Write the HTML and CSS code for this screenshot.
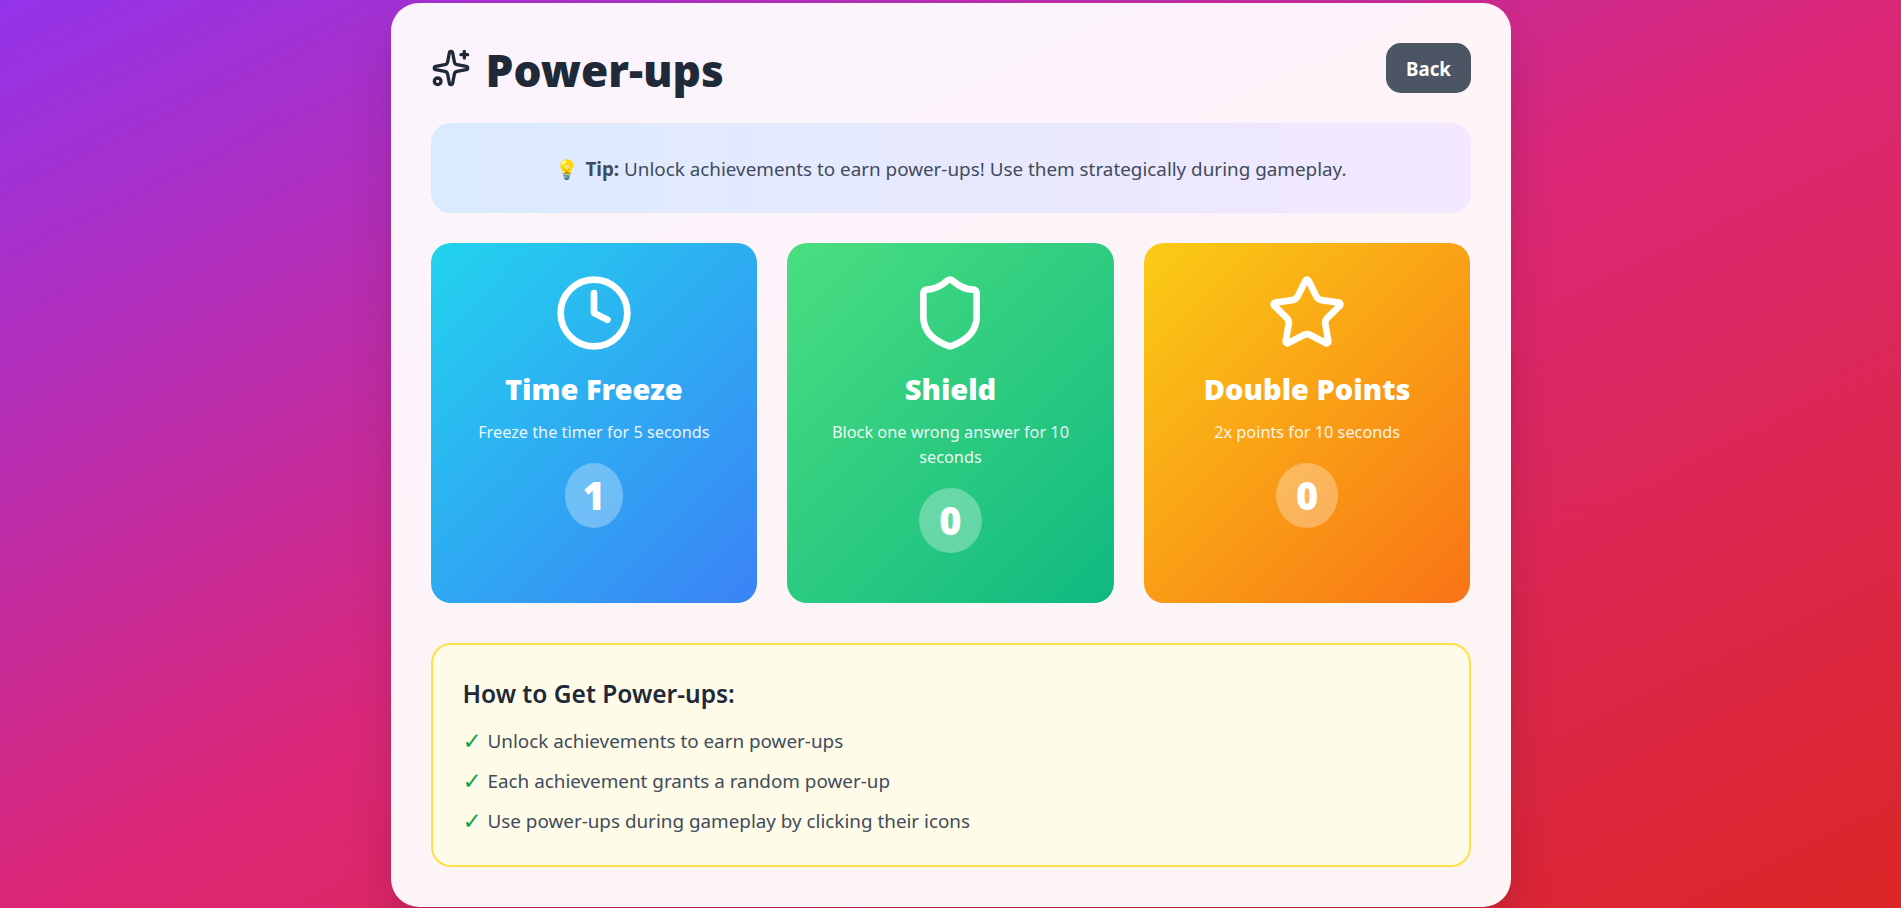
FILE: index.html
```html
<!DOCTYPE html>
<html lang="en">
<head>
<meta charset="utf-8">
<title>Power-ups</title>
<link rel="stylesheet" href="styles.css">
</head>
<body>
<main class="panel">
  <header class="header">
    <h1 class="title">
      <svg class="title-icon" viewBox="0 0 24 24"><path d="M11.017 2.814a1 1 0 0 1 1.966 0l1.051 5.558a2 2 0 0 0 1.594 1.594l5.558 1.051a1 1 0 0 1 0 1.966l-5.558 1.051a2 2 0 0 0-1.594 1.594l-1.051 5.558a1 1 0 0 1-1.966 0l-1.051-5.558a2 2 0 0 0-1.594-1.594l-5.558-1.051a1 1 0 0 1 0-1.966l5.558-1.051a2 2 0 0 0 1.594-1.594z"/><path d="M20 2v4"/><path d="M22 4h-4"/><circle cx="4" cy="20" r="2"/></svg>
      <span class="title-text">Power-ups</span>
    </h1>
    <button class="back">Back</button>
  </header>
  <div class="tip"><p class="tip-text"><span class="tip-emoji">💡</span> <strong>Tip:</strong> Unlock achievements to earn power-ups! Use them strategically during gameplay.</p></div>
  <section class="cards">
    <article class="card card-blue">
      <svg class="card-icon" viewBox="0 0 24 24"><circle cx="12" cy="12" r="10"/><path d="M12 6v6l4 2"/></svg>
      <h3 class="card-title">Time Freeze</h3>
      <p class="card-desc">Freeze the timer for 5 seconds</p>
      <div class="count count-one">1</div>
    </article>
    <article class="card card-green">
      <svg class="card-icon" viewBox="0 0 24 24"><path d="M20 13c0 5-3.5 7.5-7.66 8.95a1 1 0 0 1-.67-.01C7.5 20.5 4 18 4 13V6a1 1 0 0 1 1-1c2 0 4.5-1.2 6.24-2.72a1.17 1.17 0 0 1 1.52 0C14.51 3.81 17 5 19 5a1 1 0 0 1 1 1z"/></svg>
      <h3 class="card-title">Shield</h3>
      <p class="card-desc">Block one wrong answer for 10 seconds</p>
      <div class="count">0</div>
    </article>
    <article class="card card-orange">
      <svg class="card-icon" viewBox="0 0 24 24"><path d="M11.525 2.295a.53.53 0 0 1 .95 0l2.31 4.679a2.123 2.123 0 0 0 1.595 1.16l5.166.756a.53.53 0 0 1 .294.904l-3.736 3.638a2.123 2.123 0 0 0-.611 1.878l.882 5.14a.53.53 0 0 1-.771.56l-4.618-2.428a2.122 2.122 0 0 0-1.973 0L6.396 21.01a.53.53 0 0 1-.77-.56l.881-5.139a2.122 2.122 0 0 0-.611-1.879L2.16 9.795a.53.53 0 0 1 .294-.906l5.165-.755a2.122 2.122 0 0 0 1.597-1.16z"/></svg>
      <h3 class="card-title">Double Points</h3>
      <p class="card-desc">2x points for 10 seconds</p>
      <div class="count">0</div>
    </article>
  </section>
  <section class="howto">
    <h4 class="howto-title">How to Get Power-ups:</h4>
    <ul class="howto-list">
      <li class="howto-item"><span class="check">✓</span>Unlock achievements to earn power-ups</li>
      <li class="howto-item"><span class="check">✓</span>Each achievement grants a random power-up</li>
      <li class="howto-item"><span class="check">✓</span>Use power-ups during gameplay by clicking their icons</li>
    </ul>
  </section>
</main>
</body>
</html>
```
FILE: styles.css
```css
* { box-sizing: border-box; }
html, body { height: 100%; }
body {
  margin: 0;
  padding-top: 3px;
  display: flex;
  align-items: flex-start;
  justify-content: center;
  background: linear-gradient(to bottom right, #9333ea 0%, #db2777 50%, #dc2626 100%);
  font-family: "Noto Sans", "Open Sans", sans-serif;
  overflow: hidden;
}
.panel {
  width: 1120px;
  height: 904px;
  padding: 40px;
  border-radius: 28px;
  background: rgba(255, 255, 255, 0.95);
  box-shadow: 0 25px 50px -12px rgba(0, 0, 0, 0.25);
}
.header {
  display: flex;
  justify-content: space-between;
  align-items: flex-start;
  height: 80px;
}
.title {
  margin: 0;
  height: 50px;
  display: flex;
  align-items: center;
  gap: 15px;
  font-size: 44.2px;
  font-weight: 900;
  line-height: 50px;
  color: #1f2937;
}
.title-text { padding-top: 4px; }
.title-icon {
  width: 40px;
  height: 40px;
  fill: none;
  stroke: currentColor;
  stroke-width: 2;
  stroke-linecap: round;
  stroke-linejoin: round;
}
.back {
  width: 85px;
  height: 50px;
  padding: 1px 0 0 1px;
  border: none;
  border-radius: 15px;
  background: #4b5563;
  color: #fff;
  font: 700 18.7px "Noto Sans", sans-serif;
}
.tip {
  margin: 0 0 30px;
  height: 90px;
  padding-top: 2px;
  display: flex;
  align-items: center;
  justify-content: center;
  border-radius: 20px;
  background: linear-gradient(90deg, #dbeafe, #f3e8ff);
}
.tip-text {
  margin: 0;
  font-size: 18.85px;
  color: #414b5c;
}
.tip-emoji { margin-right: 3px; }
.cards {
  display: grid;
  grid-template-columns: repeat(3, 1fr);
  gap: 30px;
  margin-bottom: 40px;
}
.card {
  height: 360px;
  padding: 30px;
  display: flex;
  flex-direction: column;
  align-items: center;
  border-radius: 20px;
  color: #fff;
  text-align: center;
}
.card-blue { background: linear-gradient(135deg, #22d3ee, #3b82f6); }
.card-green { background: linear-gradient(135deg, #4ade80, #10b981); }
.card-orange { background: linear-gradient(135deg, #facc15, #f97316); }
.card-icon {
  width: 80px;
  height: 80px;
  margin-bottom: 16px;
  fill: none;
  stroke: #fff;
  stroke-width: 2;
  stroke-linecap: round;
  stroke-linejoin: round;
}
.card-title {
  margin: 0 0 12px;
  font-size: 29px;
  font-weight: 900;
  line-height: 39px;
}
.card-desc {
  margin: 0 0 17.5px;
  font-size: 16.3px;
  line-height: 25px;
  opacity: 0.9;
}
.count {
  padding: 8px 20px;
  border-radius: 50%;
  background: rgba(255, 255, 255, 0.3);
  font-size: 38px;
  font-weight: 900;
  line-height: 49px;
}
.count-one { padding: 8px 18px; }
.howto {
  height: 224px;
  padding: 32px 30px 30px;
  border: 2px solid #fde047;
  border-radius: 20px;
  background: #fefce8;
}
.howto-title {
  margin: 0 0 16px;
  font-size: 24.5px;
  font-weight: 600;
  line-height: 33px;
  color: #1f2937;
}
.howto-list {
  margin: 0;
  padding: 0;
  list-style: none;
  display: flex;
  flex-direction: column;
  gap: 10px;
}
.howto-item {
  display: flex;
  font-size: 18.85px;
  line-height: 30px;
  color: #414b5c;
}
.check {
  width: 25px;
  flex: none;
  color: #16a34a;
  font-family: "DejaVu Sans", sans-serif;
  font-size: 23px;
  font-weight: 700;
}
```
